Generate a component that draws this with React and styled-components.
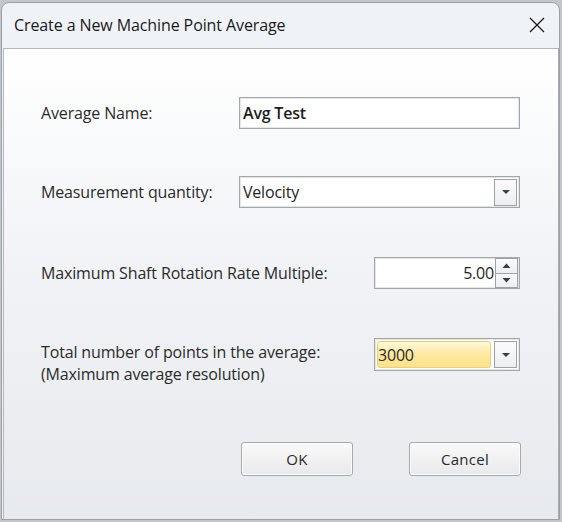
import React from "react";
import styled, { createGlobalStyle } from "styled-components";

const Global = createGlobalStyle`
  html, body { margin: 0; padding: 0; }
  body { background: #c4c6c9; font-family: "Open Sans", "Noto Sans", sans-serif; }
  * { box-sizing: border-box; }
`;

const Desktop = styled.div`
  width: 562px;
  height: 522px;
  padding: 2px 2px 2px 1px;
  background: #c4c6c9;
`;

const Dialog = styled.div`
  width: 559px;
  height: 518px;
  display: flex;
  flex-direction: column;
  background: #eff3f8;
  border: 1px solid #9aa0a6;
  border-radius: 8px 8px 0 0;
  overflow: hidden;
`;

const TitleBar = styled.div`
  height: 45px;
  flex: none;
  display: flex;
  align-items: center;
  justify-content: space-between;
  padding: 0 14px 2px 12px;
`;

const Title = styled.div`
  font-family: "Open Sans", "Noto Sans", sans-serif;
  font-size: 16px;
  color: #1a1a1a;
  letter-spacing: -0.1px;
`;

const Close = styled.div`
  width: 16px;
  height: 16px;
  display: flex;
  align-items: center;
  justify-content: center;
`;

const Content = styled.div`
  flex: 1;
  margin: 0 0 0 1px;
  border: 1px solid #b4b8bd;
  border-bottom: none;
  border-right-color: #a8acb1;
  background: linear-gradient(to bottom, #ffffff 0%, #f1f3f6 45%, #e7eaee 100%);
  display: flex;
  flex-direction: column;
  padding: 48px 38px 0 37px;
`;

const Row = styled.div`
  display: flex;
  justify-content: space-between;
  align-items: ${(p) => (p.$top ? "flex-start" : "center")};
  min-height: 32px;
  margin-top: ${(p) => p.$mt || 0}px;
`;

const Label = styled.div`
  font-family: "Open Sans", "Noto Sans", sans-serif;
  font-size: 16px;
  line-height: 22px;
  color: #2b2b2b;
  letter-spacing: -0.15px;
  padding-top: ${(p) => p.$pt || 0}px;
`;

const Field = styled.div`
  width: ${(p) => p.$w}px;
  height: ${(p) => p.$h || 32}px;
  display: flex;
  align-items: center;
  background: #ffffff;
  border: 1px solid #a3a6aa;
  box-shadow: inset 0 0 0 1px #e4e6e9;
  padding: 2px;
`;

const Value = styled.div`
  flex: 1;
  font-family: "Open Sans", "Noto Sans", sans-serif;
  font-size: 16px;
  color: #1e1e1e;
  padding: 0 ${(p) => (p.$right ? "1px" : "1px")};
  text-align: ${(p) => (p.$right ? "right" : "left")};
  font-weight: ${(p) => (p.$bold ? 600 : 400)};
  letter-spacing: -0.2px;
`;

const Highlight = styled.div`
  flex: 1;
  height: 27px;
  display: flex;
  align-items: center;
  margin-right: 3px;
  border: 1px solid #f1cf6c;
  border-radius: 3px;
  background: linear-gradient(to bottom, #fff8da 0%, #fde79b 55%, #fde38b 100%);
  font-family: "Open Sans", "Noto Sans", sans-serif;
  font-size: 16px;
  color: #2a2a2a;
  padding-left: 0;
  letter-spacing: -0.2px;
`;

const DropButton = styled.div`
  width: 23px;
  height: 27px;
  flex: none;
  display: flex;
  align-items: center;
  justify-content: center;
  border: 1px solid #9ea2a6;
  background: linear-gradient(to bottom, #fbfbfc, #eceef1);
`;

const Spin = styled.div`
  width: 23px;
  height: 30px;
  flex: none;
  display: flex;
  flex-direction: column;
  border: 1px solid #9ea2a6;
  margin-right: -1px;
`;

const SpinHalf = styled.div`
  flex: 1;
  display: flex;
  align-items: center;
  justify-content: center;
  background: linear-gradient(to bottom, #fbfbfc, #eceef1);
  & + & { border-top: 1px solid #9ea2a6; }
`;

const Buttons = styled.div`
  display: flex;
  justify-content: flex-end;
  gap: 56px;
  margin-top: 57px;
  margin-right: -1px;
`;

const Button = styled.div`
  width: 112px;
  height: 34px;
  display: flex;
  align-items: center;
  justify-content: center;
  border: 1px solid #a6a9ad;
  border-radius: 3px;
  background: linear-gradient(to bottom, #fafafa 0%, #f1f1f2 50%, #e8e9ea 100%);
  box-shadow: inset 0 0 0 1px #fbfbfb;
  font-family: "Open Sans", "Noto Sans", sans-serif;
  font-size: 15px;
  color: #2a2a2a;
  letter-spacing: 0.3px;
`;

const Arrow = ({ up }) => (
  <svg width="9" height="5" viewBox="0 0 9 5">
    <path d={up ? "M0.5 5 L4.5 0.5 L8.5 5 Z" : "M0.5 0 L4.5 4.5 L8.5 0 Z"} fill="#3b3f44" />
  </svg>
);

const SmallArrow = () => (
  <svg width="8" height="4" viewBox="0 0 8 4">
    <path d="M0 0 H8 L4 4 Z" fill="#3b3f44" />
  </svg>
);

export default function App() {
  return (
    <>
      <Global />
      <Desktop>
        <Dialog>
          <TitleBar>
            <Title>Create a New Machine Point Average</Title>
            <Close>
              <svg width="16" height="16" viewBox="0 0 16 16">
                <path d="M1 1 L15 15 M15 1 L1 15" stroke="#1a1a1a" strokeWidth="1.3" />
              </svg>
            </Close>
          </TitleBar>
          <Content>
            <Row>
              <Label>Average Name:</Label>
              <Field $w={281}>
                <Value $bold>Avg Test</Value>
              </Field>
            </Row>
            <Row $mt={47}>
              <Label>Measurement quantity:</Label>
              <Field $w={281}>
                <Value>Velocity</Value>
                <DropButton>
                  <SmallArrow />
                </DropButton>
              </Field>
            </Row>
            <Row $mt={49}>
              <Label>Maximum Shaft Rotation Rate Multiple:</Label>
              <Field $w={146}>
                <Value $right>5.00</Value>
                <Spin>
                  <SpinHalf>
                    <Arrow up />
                  </SpinHalf>
                  <SpinHalf>
                    <Arrow />
                  </SpinHalf>
                </Spin>
              </Field>
            </Row>
            <Row $mt={49} $top>
              <Label $pt={3}>
                Total number of points in the average:
                <br />
                (Maximum average resolution)
              </Label>
              <Field $w={146} $h={33}>
                <Highlight>3000</Highlight>
                <DropButton>
                  <SmallArrow />
                </DropButton>
              </Field>
            </Row>
            <Buttons>
              <Button>OK</Button>
              <Button>Cancel</Button>
            </Buttons>
          </Content>
        </Dialog>
      </Desktop>
    </>
  );
}
